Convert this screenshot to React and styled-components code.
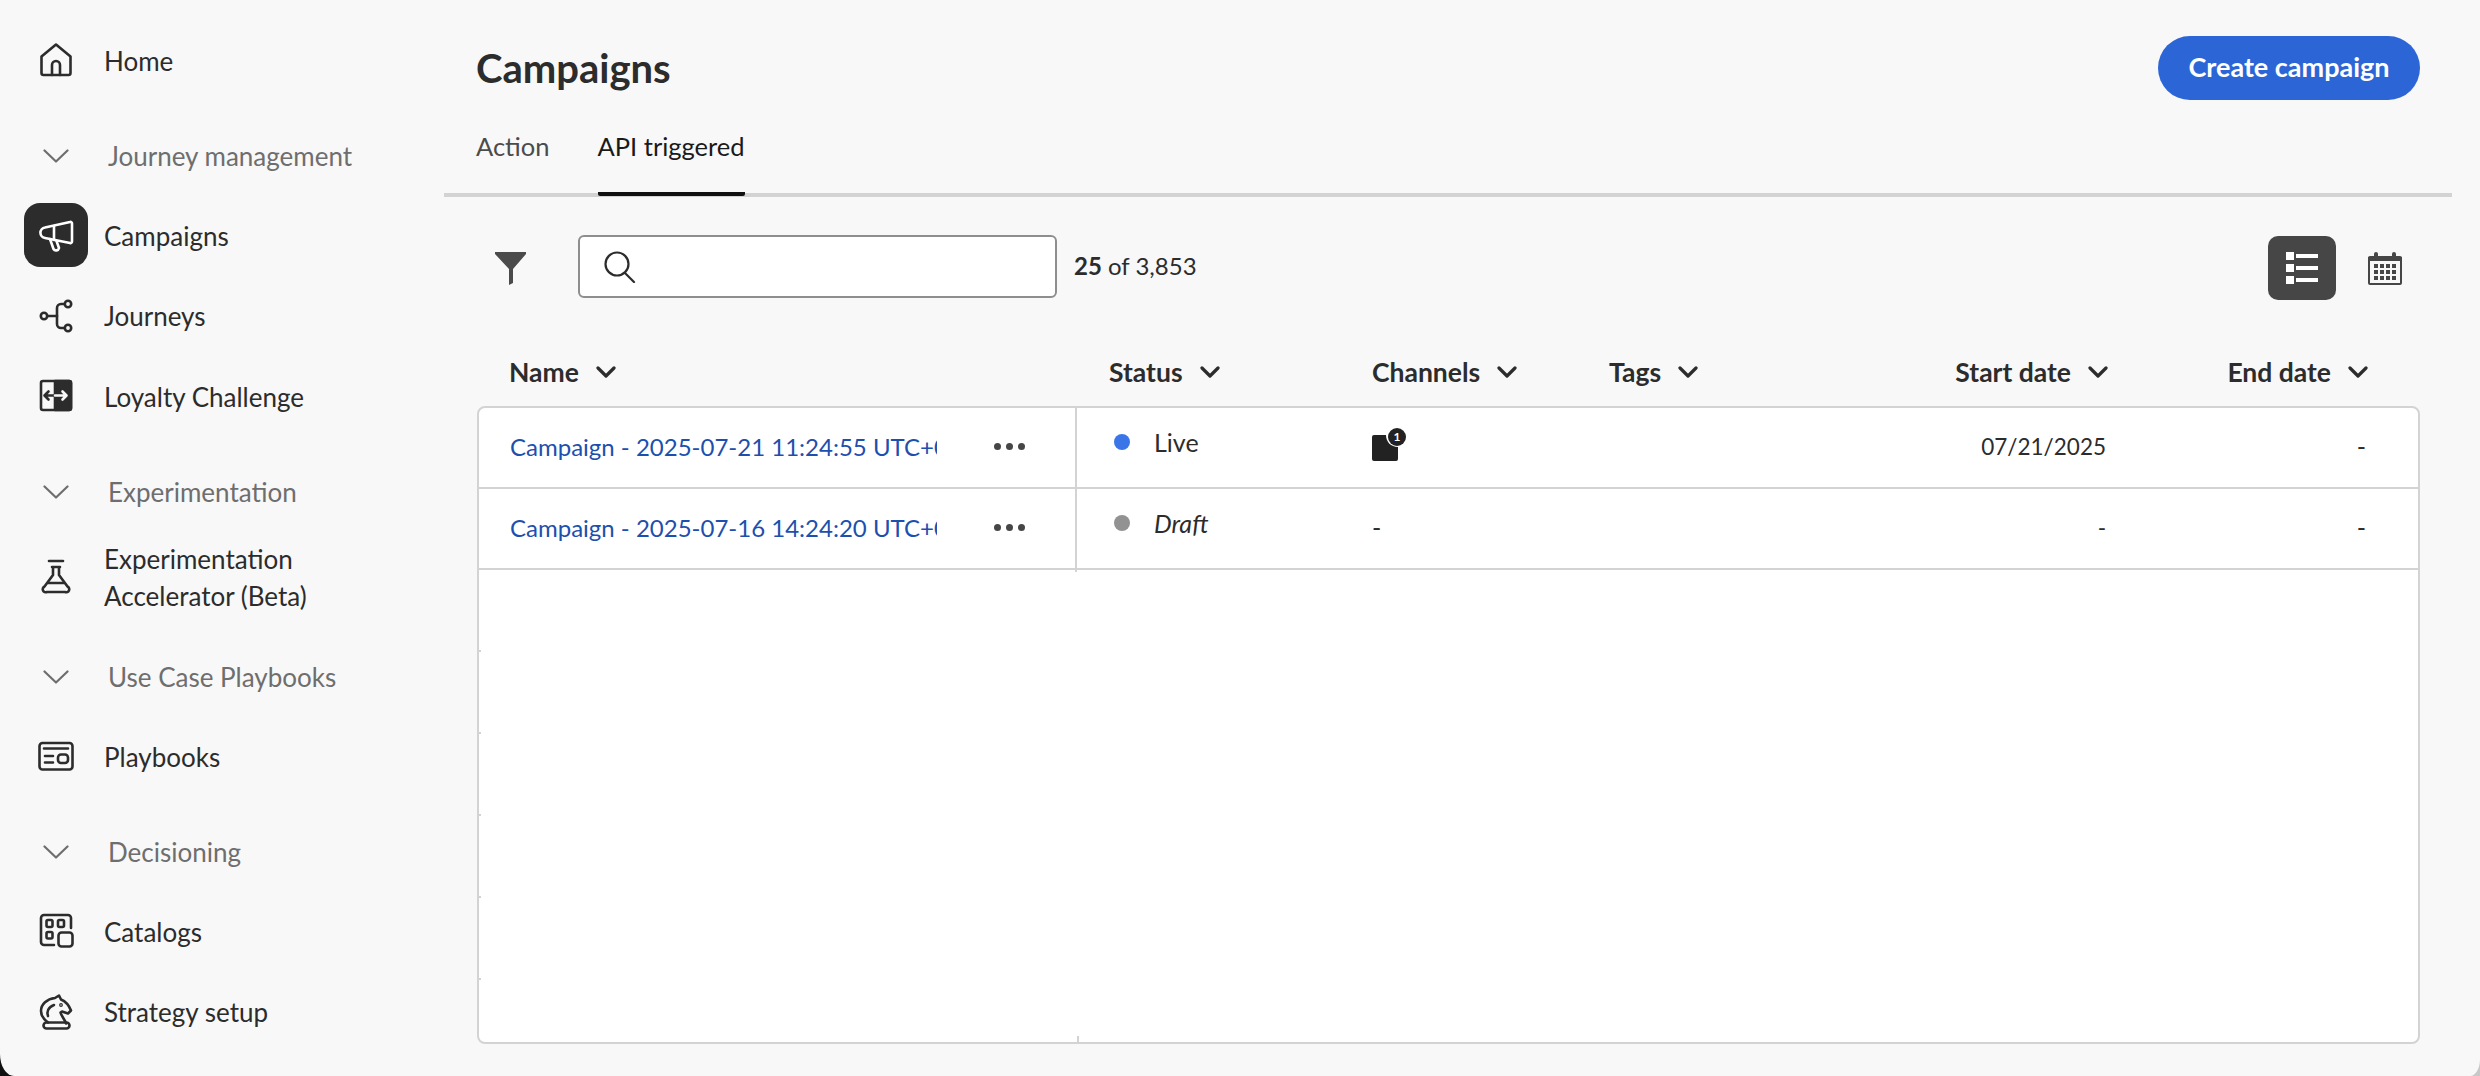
import React from "react";
import styled, { createGlobalStyle } from "styled-components";

const font = `"Lato", "Noto Sans", sans-serif`;

const GlobalStyle = createGlobalStyle`
  html, body {
    margin: 0;
    padding: 0;
    background: linear-gradient(to right, #111 50%, #c8c8c8 50%);
  }
  body {
    font-family: ${font};
    color: #2c2c2c;
  }
  * {
    box-sizing: border-box;
  }
`;

const Icon = ({ children, size = 36 }) => (
  <svg
    width={size}
    height={size}
    viewBox="0 0 36 36"
    fill="none"
    stroke="currentColor"
    strokeWidth="2.6"
    strokeLinecap="round"
    strokeLinejoin="round"
  >
    {children}
  </svg>
);

const HomeIcon = () => (
  <Icon>
    <path d="M3.5 14.5 18 2.5l14.5 12V31a2 2 0 0 1-2 2h-25a2 2 0 0 1-2-2Z" />
    <path d="M14 33V23a4 4 0 0 1 8 0v10" />
  </Icon>
);

const MegaphoneIcon = () => (
  <Icon>
    <path d="M7 10.5 32 5a1.5 1.5 0 0 1 2 1.5v18a1.5 1.5 0 0 1-2 1.5L7 21a5.3 5.3 0 0 1 0-10.5Z" />
    <path d="M16 9v14" />
    <path d="m12 22 3.5 10a3 3 0 0 0 5.5-1l-2.5-7" />
  </Icon>
);

const JourneyIcon = () => (
  <Icon>
    <circle cx="6" cy="18" r="3.2" />
    <circle cx="30" cy="6" r="3.2" />
    <circle cx="30" cy="30" r="3.2" />
    <path d="M26.8 6H23a4 4 0 0 0-4 4v16a4 4 0 0 0 4 4h3.8" />
    <path d="M9.2 18H19" />
  </Icon>
);

const LoyaltyIcon = () => (
  <Icon>
    <rect x="3" y="3" width="30" height="29" rx="2" />
    <path d="M17 3h14a2 2 0 0 1 2 2v25a2 2 0 0 1-2 2H17Z" fill="currentColor" />
    <path d="M17 17.5H7m3.5-4-4 4 4 4" />
    <path d="M17 17.5h11m-3.5-4 4 4-4 4" stroke="#f8f8f8" />
  </Icon>
);

const FlaskIcon = () => (
  <Icon>
    <path d="M11 2h14" />
    <path d="M14 8h8M15 8v8L6.500 27.500A3 3 0 0 0 9 33h18a3 3 0 0 0 2.500-5.500L21 16V8" />
    <path d="M10 24h16" />
  </Icon>
);

const PlaybookIcon = () => (
  <Icon>
    <rect x="1.500" y="5" width="33" height="26.500" rx="3" />
    <path d="M6 10.500h24M7 18h8M7 24.500h8" />
    <rect x="20" y="16.500" width="10" height="8.500" rx="3" />
  </Icon>
);

const CatalogIcon = () => (
  <Icon>
    <path d="M33 15V5a3 3 0 0 0-3-3H6a3 3 0 0 0-3 3v24a3 3 0 0 0 3 3h10" />
    <rect x="8.500" y="7" width="6" height="7" rx="1.500" />
    <rect x="20" y="7" width="6" height="7" rx="1.500" />
    <rect x="8.500" y="19" width="6" height="6.500" rx="1.500" />
    <rect x="20.500" y="19.500" width="14" height="14" rx="3" />
  </Icon>
);

const KnightIcon = () => (
  <Icon>
    <rect x="5.500" y="28.500" width="26" height="6" rx="3" />
    <path d="M10 28.500c-4-3-7-6-7-11.500 0-7 6-12 14-13l4-2.500 2 4c5 2 8 6 10 11l-3 3-6-2-1.500 1c1 4 4.500 7 5.500 11" />
    <path d="M10 22c-1.500-4 0-9 6-11" />
    <circle cx="23" cy="11" r="0.6" />
  </Icon>
);

const navGroups = [
  {
    items: [{ label: "Home", icon: <HomeIcon /> }],
  },
  {
    title: "Journey management",
    items: [
      { label: "Campaigns", icon: <MegaphoneIcon />, active: true },
      { label: "Journeys", icon: <JourneyIcon /> },
      { label: "Loyalty Challenge", icon: <LoyaltyIcon /> },
    ],
  },
  {
    title: "Experimentation",
    items: [{ label: "Experimentation Accelerator (Beta)", icon: <FlaskIcon />, wrap: true }],
  },
  {
    title: "Use Case Playbooks",
    items: [{ label: "Playbooks", icon: <PlaybookIcon /> }],
  },
  {
    title: "Decisioning",
    items: [
      { label: "Catalogs", icon: <CatalogIcon /> },
      { label: "Strategy setup", icon: <KnightIcon /> },
    ],
  },
];

const columns = [
  { label: "Name" },
  { label: "Status" },
  { label: "Channels" },
  { label: "Tags" },
  { label: "Start date", right: true },
  { label: "End date", right: true },
];

const rows = [
  {
    name: "Campaign - 2025-07-21 11:24:55 UTC+01:00",
    status: "Live",
    dot: "#3b76e8",
    hasChannel: true,
    start: "07/21/2025",
  },
  {
    name: "Campaign - 2025-07-16 14:24:20 UTC+01:00",
    status: "Draft",
    dot: "#929292",
    draft: true,
    start: "-",
  },
];

const App = () => (
  <>
    <GlobalStyle />
    <Page>
      <Sidebar>
        {navGroups.map((group, i) => (
          <NavGroup key={i}>
            {group.title && (
              <SectionHeader>
                <SectionChevron>
                  <svg width="26" height="14" viewBox="0 0 26 14" fill="none" stroke="currentColor" strokeWidth="2.200" strokeLinecap="round" strokeLinejoin="round">
                    <path d="m1.500 1.500 11.500 11 11.500-11" />
                  </svg>
                </SectionChevron>
                {group.title}
              </SectionHeader>
            )}
            {group.items.map((item) => (
              <NavItem key={item.label} $wrap={item.wrap}>
                <NavIcon $active={item.active}>{item.icon}</NavIcon>
                <NavLabel $wrap={item.wrap}>{item.label}</NavLabel>
              </NavItem>
            ))}
          </NavGroup>
        ))}
      </Sidebar>

      <Main>
        <TitleBar>
          <Title>Campaigns</Title>
          <PrimaryButton>Create campaign</PrimaryButton>
        </TitleBar>

        <TabBar>
          <Tab>Action</Tab>
          <Tab $active>API triggered</Tab>
        </TabBar>

        <Toolbar>
          <FilterButton>
            <svg width="31" height="33" viewBox="0 0 31 33" fill="#4b4b4b">
              <path d="M0 0h31v2L18 17v14l-4 2V17L0 2Z" />
            </svg>
          </FilterButton>
          <SearchBox>
            <svg width="32" height="32" viewBox="0 0 32 32" fill="none" stroke="#2c2c2c" strokeWidth="2.200" strokeLinecap="round">
              <circle cx="13" cy="13" r="11.500" />
              <path d="m21 22 9 9" />
            </svg>
          </SearchBox>
          <Count>
            <strong>25</strong> of 3,853
          </Count>
          <ViewSwitch>
            <ListButton>
              <svg width="32" height="32" viewBox="0 0 32 32" fill="#fff">
                <rect x="0" y="0" width="8" height="8" />
                <rect x="10" y="2" width="22" height="4" />
                <rect x="0" y="12" width="8" height="8" />
                <rect x="10" y="14" width="22" height="4" />
                <rect x="0" y="24" width="8" height="8" />
                <rect x="10" y="26" width="22" height="4" />
              </svg>
            </ListButton>
            <svg width="34" height="33" viewBox="0 0 34 33" fill="#464646">
              <rect x="1" y="5" width="32" height="27" rx="1" fill="none" stroke="#464646" strokeWidth="2" />
              <rect x="0" y="5" width="34" height="4" />
              <rect x="6" y="0" width="4" height="8" rx="2" />
              <rect x="24" y="0" width="4" height="8" rx="2" />
              {[0, 1, 2].map((r) =>
                [0, 1, 2, 3].map((c) => (
                  <rect key={`${r}-${c}`} x={6 + c * 6} y={12 + r * 6} width="4" height="4" />
                ))
              )}
            </svg>
          </ViewSwitch>
        </Toolbar>

        <HeaderRow>
          {columns.map((col) => (
            <HeaderCell key={col.label} $right={col.right}>
              {col.label}
              <svg width="20" height="12" viewBox="0 0 20 12" fill="none" stroke="#2c2c2c" strokeWidth="3.200" strokeLinecap="round" strokeLinejoin="round">
                <path d="m2 2 8 8 8-8" />
              </svg>
            </HeaderCell>
          ))}
        </HeaderRow>

        <Table>
          {rows.map((row) => (
            <Row key={row.name}>
              <NameCell>
                <NameLink>{row.name}</NameLink>
                <MoreDots>
                  <i />
                  <i />
                  <i />
                </MoreDots>
              </NameCell>
              <StatusCell $draft={row.draft}>
                <StatusDot $color={row.dot} />
                {row.status}
              </StatusCell>
              <ChannelCell>
                {row.hasChannel ? (
                  <ChannelIcon>
                    <svg width="26" height="26" viewBox="0 0 26 26" fill="#222">
                      <path d="M2 0h12c0 7 5 12 12 12v12a2 2 0 0 1-2 2H2a2 2 0 0 1-2-2V2a2 2 0 0 1 2-2Z" />
                    </svg>
                    <ChannelBadge>1</ChannelBadge>
                  </ChannelIcon>
                ) : (
                  "-"
                )}
              </ChannelCell>
              <span />
              <DateCell>{row.start}</DateCell>
              <EndCell>-</EndCell>
            </Row>
          ))}
          <EmptyArea>
            {[0, 1, 2, 3, 4].map((n) => (
              <EmptyRow key={n} />
            ))}
          </EmptyArea>
          <ColumnStub />
        </Table>
      </Main>
    </Page>
  </>
);

export default App;

const gridColumns = "600px 263px 237px 223px 340px 1fr";

const Page = styled.div`
  display: flex;
  width: 2480px;
  height: 1076px;
  overflow: hidden;
  background: #f8f8f8;
  border-bottom-left-radius: 14px 22px;
  border-bottom-right-radius: 10px 17px;
`;

const Sidebar = styled.nav`
  width: 444px;
  flex: none;
  padding: 28px 0 0 24px;
`;

const NavGroup = styled.div`
  display: flex;
  flex-direction: column;
  gap: 16.5px;
  & + & {
    margin-top: 44px;
  }
`;

const SectionHeader = styled.div`
  display: flex;
  align-items: center;
  height: 40px;
  margin-bottom: 10.5px;
  font-size: 26px;
  color: #6e6e6e;
`;

const SectionChevron = styled.span`
  display: flex;
  width: 84px;
  padding-left: 19px;
`;

const NavItem = styled.div`
  display: flex;
  align-items: center;
  gap: 16px;
  min-height: 64px;
  margin-bottom: ${(p) => (p.$wrap ? "-1px" : "0")};
`;

const NavIcon = styled.span`
  display: flex;
  align-items: center;
  justify-content: center;
  width: 64px;
  height: 64px;
  flex: none;
  border-radius: 16px;
  background: ${(p) => (p.$active ? "#2c2c2c" : "transparent")};
  color: ${(p) => (p.$active ? "#fff" : "#2c2c2c")};
`;

const NavLabel = styled.span`
  padding-top: 2px;
  font-size: 26px;
  line-height: 36.5px;
  color: #2c2c2c;
  width: ${(p) => (p.$wrap ? "260px" : "auto")};
`;

const Main = styled.main`
  flex: 1;
  min-width: 0;
  padding-top: 36px;
`;

const TitleBar = styled.div`
  display: flex;
  align-items: center;
  justify-content: space-between;
  padding: 0 60px 0 32px;
  height: 64px;
`;

const Title = styled.h1`
  margin: 0;
  font-size: 40px;
  font-weight: 700;
  color: #2c2c2c;
`;

const PrimaryButton = styled.button`
  width: 262px;
  height: 64px;
  padding: 0 0 3px;
  border: none;
  border-radius: 32px;
  background: #2c65d6;
  color: #fff;
  font-family: ${font};
  font-size: 27px;
  font-weight: 700;
`;

const TabBar = styled.div`
  display: flex;
  gap: 48px;
  height: 77px;
  margin: 20px 28px 0 0;
  padding-left: 32px;
  border-bottom: 4px solid #d3d3d3;
`;

const Tab = styled.div`
  height: 76px;
  padding-top: 8px;
  font-size: 25.5px;
  line-height: 36px;
  color: ${(p) => (p.$active ? "#1a1a1a" : "#4b4b4b")};
  border-bottom: 4px solid ${(p) => (p.$active ? "#111" : "transparent")};
  border-radius: 0 0 2px 2px;
`;

const Toolbar = styled.div`
  display: flex;
  align-items: center;
  height: 66px;
  margin-top: 38px;
  padding: 0 78px 0 51px;
`;

const FilterButton = styled.span`
  display: flex;
  width: 83px;
`;

const SearchBox = styled.div`
  display: flex;
  align-items: center;
  align-self: flex-start;
  width: 479px;
  height: 63px;
  padding-left: 24px;
  background: #fff;
  border: 2px solid #8e8e8e;
  border-radius: 6px;
`;

const Count = styled.span`
  align-self: flex-start;
  margin-left: 17px;
  font-size: 24px;
  line-height: 62px;
  color: #2c2c2c;
`;

const ViewSwitch = styled.div`
  display: flex;
  align-items: center;
  gap: 32px;
  margin-left: auto;
`;

const ListButton = styled.div`
  display: flex;
  align-items: center;
  justify-content: center;
  width: 68px;
  height: 64px;
  background: #464646;
  border-radius: 10px;
`;

const HeaderRow = styled.div`
  display: grid;
  grid-template-columns: ${gridColumns};
  align-items: center;
  width: 1943px;
  height: 63px;
  margin: 39px 0 3px 33px;
`;

const HeaderCell = styled.div`
  display: flex;
  align-items: center;
  justify-content: ${(p) => (p.$right ? "flex-end" : "flex-start")};
  gap: 17px;
  padding: ${(p) => (p.$right ? "0 52px 0 0" : "0 0 0 32px")};
  font-size: 26.5px;
  font-weight: 700;
  color: #2c2c2c;
  &:nth-child(5) {
    padding-right: 32px;
  }
`;

const Table = styled.div`
  position: relative;
  width: 1943px;
  height: 638px;
  margin-left: 33px;
  background: #fff;
  border: 2px solid #d3d3d3;
  border-radius: 8px;
`;

const Row = styled.div`
  display: grid;
  grid-template-columns: ${gridColumns};
  align-items: center;
  height: 81px;
  margin-left: -2px;
  padding-bottom: 3px;
  border-bottom: 2px solid #d3d3d3;
  font-size: 25px;
  color: #2c2c2c;
`;

const NameCell = styled.div`
  display: flex;
  align-items: center;
  align-self: start;
  height: calc(100% + 7px);
  padding: 0 0 7px 33px;
  border-right: 2px solid #d3d3d3;
`;

const NameLink = styled.a`
  display: block;
  width: 427px;
  overflow: hidden;
  white-space: nowrap;
  color: #1d4fae;
  font-size: 24px;
`;

const MoreDots = styled.span`
  display: flex;
  gap: 5px;
  margin-left: 57px;
  i {
    display: block;
    width: 7px;
    height: 7px;
    border-radius: 50%;
    background: #464646;
  }
`;

const StatusCell = styled.div`
  display: flex;
  align-items: center;
  gap: 24px;
  padding: 0 0 9px 37px;
  font-style: ${(p) => (p.$draft ? "italic" : "normal")};
`;

const StatusDot = styled.span`
  width: 16px;
  height: 16px;
  border-radius: 50%;
  background: ${(p) => p.$color};
`;

const ChannelCell = styled.div`
  padding-left: 32px;
`;

const ChannelIcon = styled.span`
  position: relative;
  display: block;
  width: 26px;
  height: 26px;
  margin-top: 4px;
`;

const ChannelBadge = styled.span`
  position: absolute;
  top: -7px;
  left: 16px;
  width: 18px;
  height: 18px;
  border-radius: 50%;
  background: #222;
  color: #fff;
  font-size: 12px;
  font-weight: 700;
  line-height: 18px;
  text-align: center;
`;

const DateCell = styled.div`
  padding-right: 34px;
  text-align: right;
  font-size: 22.5px;
`;

const EndCell = styled.div`
  padding-right: 52px;
  text-align: right;
`;

const EmptyArea = styled.div`
  display: flex;
  flex-direction: column;
`;

const EmptyRow = styled.div`
  position: relative;
  height: 82px;
  &::after {
    content: "";
    position: absolute;
    left: 0;
    bottom: 0;
    width: 2px;
    height: 2px;
    background: #d3d3d3;
  }
`;

const ColumnStub = styled.span`
  position: absolute;
  left: 598px;
  bottom: 0;
  width: 2px;
  height: 6px;
  background: #d3d3d3;
`;
